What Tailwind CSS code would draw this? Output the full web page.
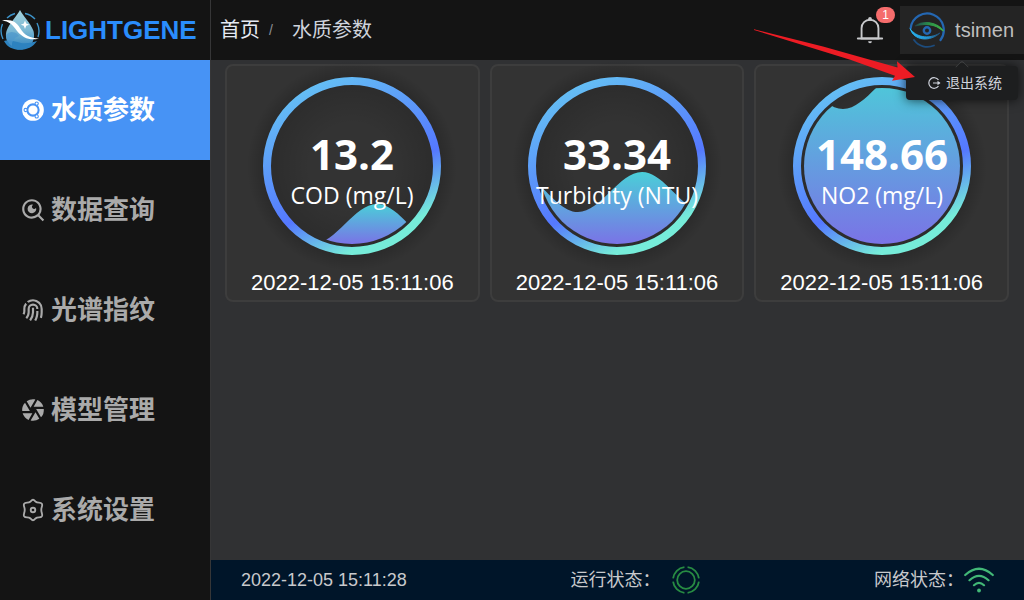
<!DOCTYPE html>
<html lang="zh-CN">
<head>
    <meta charset="UTF-8">
    <meta name="viewport" content="width=device-width, initial-scale=1.0">
    <title>水质参数</title>
    <script src="https://cdn.jsdelivr.net/npm/@tailwindcss/browser@4"></script>
</head>
<body class="flex h-screen overflow-hidden bg-[#303133] font-['Liberation_Sans','Noto_Sans_CJK_SC',sans-serif]">
    <!-- Sidebar -->
    <aside class="flex w-[211px] shrink-0 flex-col border-r border-[#363637] bg-[#141414]">
        <a href="#" class="flex h-[60px] items-center gap-[5px] text-[26px] font-bold text-[#2a8dfc]">
            <svg class="size-10 shrink-0" viewBox="0 0 40 40" fill="none" aria-hidden="true">
                <defs>
                    <linearGradient id="drop" x1="0" y1="0" x2="0" y2="1">
                        <stop offset="0" stop-color="#a3d3dd" />
                        <stop offset=".5" stop-color="#7db9d4" />
                        <stop offset="1" stop-color="#2a7fbd" />
                    </linearGradient>
                </defs>
                <g stroke="#3d93c9" stroke-width="1.4">
                    <path d="M7 8A18.500 18.500 0 0 1 15 3.500M25 3.500A18.500 18.500 0 0 1 35 9M2.500 14A18 18 0 0 0 3 29M37 13A18 18 0 0 1 38 27" />
                </g>
                <path d="M20 0C17 6 10 12 6.500 21C4 30 10 39.500 20 39.500S36 31 33.500 21C30 12 23 6 20 0Z" fill="url(#drop)" />
                <path d="M4 31C8 29 14 31 21 33C28 34 33 32 37 31C33 37 27 39.800 20 39.800C13 39.800 7 37 4 31Z" fill="#2d82bf" />
                <path d="M6 25A8 8 0 0 1 19 26A9 9 0 0 0 12 36Q6 32 6 25Z" fill="#4d97cc" opacity=".7" />
                <path d="M2 20.500C12 19 16 22 20 28C25 36 30 38 39 38.500C30 41 23 38 17 31C12 24 9 21.500 2 20.500Z" transform="translate(0 -10) scale(1 1)" fill="#fff" />
                <path d="M25 10.500L26.200 13.600L29.200 14.700L26.200 15.800L25 19L23.800 15.800L20.800 14.700L23.800 13.600Z" fill="#fff" />
            </svg>
            <span>LIGHTGENE</span>
        </a>
        <nav class="flex flex-col text-[26px] font-bold text-[#aaaaaa]">
            <a href="#" class="flex h-[100px] items-center gap-[5px] bg-[#4793f5] pl-5 text-white" aria-current="page">
                <svg class="size-[26px]" viewBox="0 0 24 24" aria-hidden="true">
                    <circle cx="12" cy="12" r="10" fill="currentColor" />
                    <circle cx="12" cy="12" r="5.200" fill="none" stroke="#4793f5" stroke-width="1.900" />
                    <g fill="currentColor" stroke="#4793f5" stroke-width="1">
                        <circle cx="5.200" cy="12" r="1.500" />
                        <circle cx="15.400" cy="6.110" r="1.500" />
                        <circle cx="15.400" cy="17.890" r="1.500" />
                    </g>
                </svg>
                <span>水质参数</span>
            </a>
            <a href="#" class="flex h-[100px] items-center gap-[5px] pl-5">
                <svg class="size-[26px]" viewBox="0 0 24 24" fill="currentColor" aria-hidden="true">
                    <path d="M18.031 16.617l4.283 4.282-1.415 1.415-4.282-4.283A8.960 8.960 0 0 1 11 20c-4.968 0-9-4.032-9-9s4.032-9 9-9 9 4.032 9 9a8.960 8.960 0 0 1-1.969 5.617zm-2.006-.742A6.977 6.977 0 0 0 18 11c0-3.868-3.133-7-7-7-3.868 0-7 3.132-7 7 0 3.867 3.132 7 7 7a6.977 6.977 0 0 0 4.875-1.975l.150-.150zm-3.847-8.699a2 2 0 1 0 2.646 2.646 4 4 0 1 1-2.646-2.646z" />
                </svg>
                <span>数据查询</span>
            </a>
            <a href="#" class="flex h-[100px] items-center gap-[5px] pl-5">
                <svg class="size-[26px]" viewBox="0 0 24 24" fill="currentColor" aria-hidden="true">
                    <path d="M17 13v1c0 2.770-.664 5.445-1.915 7.846l-.227.420-1.747-.974c1.160-2.080 1.810-4.410 1.882-6.836L15 14v-1h2zm-6-3h2v4l-.005.379a12.941 12.941 0 0 1-2.691 7.549l-.231.290-1.550-1.264a10.944 10.944 0 0 0 2.471-6.588L11 14v-4zm1-4a5 5 0 0 1 5 5h-2a3 3 0 0 0-6 0v3c0 2.235-.820 4.344-2.270 5.977l-.212.230-1.448-1.380a6.969 6.969 0 0 0 1.925-4.524L7 14v-3a5 5 0 0 1 5-5zm0-4a9 9 0 0 1 9 9v3c0 1.698-.202 3.370-.597 4.990l-.139.539-1.930-.526c.392-1.437.613-2.922.658-4.435L19 14v-3A7 7 0 0 0 7.808 5.394L6.383 3.968A8.962 8.962 0 0 1 12 2zM4.968 5.383l1.426 1.425a6.966 6.966 0 0 0-1.390 3.951L5 11 5.004 13c0 1.120-.264 2.203-.762 3.177l-.156.290-1.737-.992c.380-.665.602-1.407.646-2.183L3.004 13v-2a8.940 8.940 0 0 1 1.964-5.617z" />
                </svg>
                <span>光谱指纹</span>
            </a>
            <a href="#" class="flex h-[100px] items-center gap-[5px] pl-5">
                <svg class="size-[26px]" viewBox="0 0 24 24" fill="currentColor" aria-hidden="true">
                    <path d="M9.827 21.763L14.310 14l3.532 6.117A9.955 9.955 0 0 1 12 22c-.746 0-1.473-.082-2.173-.237zM7.890 21.120A10.028 10.028 0 0 1 2.458 15h8.965L7.890 21.119zM2.050 13a9.964 9.964 0 0 1 2.583-7.761L9.112 13H2.050zm4.109-9.117A9.955 9.955 0 0 1 12 2c.746 0 1.473.082 2.173.237L9.690 10 6.159 3.883zM16.110 2.880A10.028 10.028 0 0 1 21.542 9h-8.965l3.533-6.119zM21.950 11a9.964 9.964 0 0 1-2.583 7.761L14.888 11h7.064z" />
                </svg>
                <span>模型管理</span>
            </a>
            <a href="#" class="flex h-[100px] items-center gap-[5px] pl-5">
                <svg class="size-[26px]" viewBox="0 0 24 24" fill="none" stroke="currentColor" stroke-width="1.700" stroke-linejoin="round" aria-hidden="true">
                    <path d="M12 2.500C13 2.500 13.800 3.600 14.600 4.400C15.400 5.200 16.400 5.200 17.500 5.200C18.700 5.200 19.600 5.300 20.200 6.300C20.800 7.400 20.500 8.200 20.100 9.300C19.700 10.500 19.700 13.500 20.100 14.700C20.500 15.800 20.800 16.600 20.200 17.700C19.600 18.700 18.700 18.800 17.500 18.800C16.400 18.800 15.400 18.800 14.600 19.600C13.800 20.400 13 21.500 12 21.500S10.200 20.400 9.400 19.600C8.600 18.800 7.600 18.800 6.500 18.800C5.300 18.800 4.400 18.700 3.800 17.700C3.200 16.600 3.500 15.800 3.900 14.700C4.300 13.500 4.300 10.500 3.900 9.300C3.500 8.200 3.200 7.400 3.800 6.300C4.400 5.300 5.300 5.200 6.500 5.200C7.600 5.200 8.600 5.200 9.400 4.400C10.200 3.600 11 2.500 12 2.500Z" />
                    <circle cx="12" cy="12" r="2.100" />
                </svg>
                <span>系统设置</span>
            </a>
        </nav>
    </aside>

    <div class="flex min-w-0 flex-1 flex-col">
        <!-- Header -->
        <header class="flex h-[60px] shrink-0 items-center justify-between bg-[#141414] pl-[9px] text-xl">
            <nav class="flex items-center" aria-label="breadcrumb">
                <a href="#" class="text-[#e5eaf3]">首页</a>
                <span class="mr-[19px] ml-[9px] text-sm text-[#8d9095]">/</span>
                <span class="text-[#cfd3dc]">水质参数</span>
            </nav>
            <div class="flex items-center gap-[15px]">
                <button class="relative" aria-label="通知">
                    <svg class="size-[30px] text-[#c8c9cc]" viewBox="0 0 1024 1024" fill="currentColor" aria-hidden="true">
                        <path d="M512 64a64 64 0 0 1 64 64v64H448v-64a64 64 0 0 1 64-64z" />
                        <path d="M256 768h512V448a256 256 0 1 0-512 0v320zm256-640a320 320 0 0 1 320 320v384H192V448a320 320 0 0 1 320-320z" />
                        <path d="M96 768h832q32 0 32 32t-32 32H96q-32 0-32-32t32-32zm352 128h128a64 64 0 0 1-128 0z" />
                    </svg>
                    <span class="absolute -top-2 left-[21px] flex h-4 w-[19px] items-center justify-center rounded-full bg-[#f56c6c] text-xs text-white">1</span>
                </button>
                <div class="relative">
                    <button class="flex h-12 items-center gap-[10px] bg-[#242424] pr-[10px] pl-[9px] text-[#bfbfbf]" aria-expanded="true">
                        <svg class="size-9" viewBox="0 0 36 36" fill="none" stroke-linecap="round" aria-hidden="true">
                            <defs>
                                <linearGradient id="lid" gradientUnits="userSpaceOnUse" x1="5" y1="0" x2="35" y2="0">
                                    <stop offset="0" stop-color="#1f5f6a" stop-opacity=".4" />
                                    <stop offset=".5" stop-color="#2b8f48" />
                                    <stop offset="1" stop-color="#42b649" />
                                </linearGradient>
                                <linearGradient id="lower" gradientUnits="userSpaceOnUse" x1="1" y1="0" x2="31" y2="0">
                                    <stop offset="0" stop-color="#27b4f0" />
                                    <stop offset=".6" stop-color="#2594d3" />
                                    <stop offset="1" stop-color="#204a70" />
                                </linearGradient>
                            </defs>
                            <path d="M1.700 16A16.600 16.600 0 1 1 31.500 28" stroke="#2467b2" stroke-width="2.200" />
                            <path d="M5 28A16.500 16.500 0 0 0 25 33.500" stroke="#1d4c7d" stroke-width="1.800" />
                            <path d="M6 14C14 9 27 9 34.500 19C26 12 15 11 6 14Z" fill="url(#lid)" stroke="url(#lid)" stroke-width="1.200" />
                            <path d="M1.300 17C7 25 19 28 31 21C21 30 5 29 1.300 17Z" fill="url(#lower)" stroke="url(#lower)" />
                            <circle cx="18" cy="18.500" r="3.200" stroke="#2467b2" stroke-width="2.400" />
                        </svg>
                        <span>tsimen</span>
                    </button>
                    <div class="absolute top-[60px] right-[6px] z-10 rounded bg-[#1d1e1f] shadow-[0_0_12px_rgba(0,0,0,0.72)]">
                        <span class="absolute -top-1 left-[51px] size-[10px] rotate-45 rounded-tl-sm border-t border-l border-[#414243] bg-[#1d1e1f]"></span>
                        <button class="relative flex h-[34px] w-28 items-center gap-[5px] pl-[21px] text-sm text-[#cfd3dc]">
                            <svg class="size-[14px]" viewBox="0 0 14 14" fill="none" stroke="currentColor" stroke-width="1.200" aria-hidden="true">
                                <path d="M11.500 4A5.300 5.300 0 1 0 11.500 10M6 7H12.500" />
                                <path d="M10.500 4.800L13.500 7L10.500 9.200Z" fill="currentColor" stroke="none" />
                            </svg>
                            <span>退出系统</span>
                        </button>
                    </div>
                </div>
            </div>
        </header>

        <!-- Gauges -->
        <main class="grid flex-1 grid-cols-3 content-start gap-[10px] overflow-hidden pt-1 pr-[15px] pl-[14px] font-['Liberation_Sans',sans-serif]">
            <section class="flex flex-col items-center rounded-lg border-2 border-[#3d3d3d] bg-[#333333]">
                <svg class="size-[200px] overflow-visible font-['Open_Sans','Noto_Sans',sans-serif]" viewBox="-100 -100 200 200" role="img" aria-label="COD">
                    <defs>
                        <linearGradient id="ring" gradientUnits="userSpaceOnUse" x1="-40" y1="-79" x2="34" y2="68">
                            <stop offset="0" stop-color="#64bdf4" />
                            <stop offset=".68" stop-color="#5578ff" />
                            <stop offset="1" stop-color="#76ecd9" />
                        </linearGradient>
                        <linearGradient id="water" x1="0" y1="0" x2="0" y2="1">
                            <stop offset="0" stop-color="#4acfd8" />
                            <stop offset="1" stop-color="#7a73e6" />
                        </linearGradient>
                        <radialGradient id="glow">
                            <stop offset=".4" stop-color="#000" stop-opacity="0" />
                            <stop offset=".85" stop-color="#000" stop-opacity=".16" />
                            <stop offset="1" stop-color="#000" stop-opacity="0" />
                        </radialGradient>
                        <clipPath id="bowl"><circle r="78" /></clipPath>
                    </defs>
                    <circle r="105" fill="url(#glow)" />
                    <circle r="85" fill="none" stroke="url(#ring)" stroke-width="8" />
                    <g clip-path="url(#bowl)">
                        <path d="M-102 38C-79 38 -62 78 -39 78S2 38 25 38S65 78 88 78H-102Z" fill="url(#water)" />
                    </g>
                    <text y="4" text-anchor="middle" font-size="42" font-weight="700" fill="#fff">13.2</text>
                    <text y="38" text-anchor="middle" font-size="23" fill="#fff">COD (mg/L)</text>
                </svg>
                <time class="text-[22px] leading-[34px] text-white">2022-12-05 15:11:06</time>
            </section>

            <section class="flex flex-col items-center rounded-lg border-2 border-[#3d3d3d] bg-[#333333]">
                <svg class="size-[200px] overflow-visible font-['Open_Sans','Noto_Sans',sans-serif]" viewBox="-100 -100 200 200" role="img" aria-label="Turbidity">
                    <circle r="105" fill="url(#glow)" />
                    <circle r="85" fill="none" stroke="url(#ring)" stroke-width="8" />
                    <g clip-path="url(#bowl)">
                        <path d="M-102 6C-79 6 -62 46 -39 46S2 6 25 6S65 46 88 46V78H-102Z" fill="url(#water)" />
                    </g>
                    <text y="4" text-anchor="middle" font-size="42" font-weight="700" fill="#fff">33.34</text>
                    <text y="38" text-anchor="middle" font-size="23" fill="#fff">Turbidity (NTU)</text>
                </svg>
                <time class="text-[22px] leading-[34px] text-white">2022-12-05 15:11:06</time>
            </section>

            <section class="flex flex-col items-center rounded-lg border-2 border-[#3d3d3d] bg-[#333333]">
                <svg class="size-[200px] overflow-visible font-['Open_Sans','Noto_Sans',sans-serif]" viewBox="-100 -100 200 200" role="img" aria-label="NO2">
                    <circle r="105" fill="url(#glow)" />
                    <circle r="85" fill="none" stroke="url(#ring)" stroke-width="8" />
                    <g clip-path="url(#bowl)">
                        <path d="M-102 -97C-79 -97 -62 -57 -39 -57S2 -97 25 -97S65 -57 88 -57V78H-102Z" fill="url(#water)" />
                    </g>
                    <text y="4" text-anchor="middle" font-size="42" font-weight="700" fill="#fff">148.66</text>
                    <text y="38" text-anchor="middle" font-size="23" fill="#fff">NO2 (mg/L)</text>
                </svg>
                <time class="text-[22px] leading-[34px] text-white">2022-12-05 15:11:06</time>
            </section>
        </main>

        <!-- Status bar -->
        <footer class="flex h-10 shrink-0 items-center justify-between bg-[#001529] px-[30px] text-lg text-[#c8c9cc]">
            <time>2022-12-05 15:11:28</time>
            <div class="flex items-center pr-[10px]">
                <span>运行状态：</span>
                <svg class="ml-3 size-7" viewBox="-14 -14 28 28" fill="none" stroke="#278c43" stroke-width="1.800" aria-hidden="true">
                    <circle r="8.800" />
                    <circle r="13" pathLength="400" stroke-dasharray="84 16" stroke-dashoffset="-8" />
                </svg>
            </div>
            <div class="flex items-center">
                <span>网络状态：</span>
                <svg class="size-[30px]" viewBox="0 0 30 30" fill="none" stroke="#42b877" stroke-width="2.200" stroke-linecap="round" aria-hidden="true">
                    <path d="M1.200 10Q15 -2.500 28.800 10M5.500 15.200Q15 6.500 24.500 15.200M10 20.200Q15 15.500 20 20.200" />
                    <circle cx="15" cy="25.500" r="1.900" fill="#42b877" stroke="none" />
                </svg>
            </div>
        </footer>
    </div>

    <!-- Pointer to the logout entry -->
    <svg class="pointer-events-none absolute top-7 right-[109px] z-20 h-[54px] w-[162px]" viewBox="0 0 162 54" aria-hidden="true">
        <path d="M1 2L1 1.200L70 18.500L144.500 39.600L144 33.300L162 49L139 52.700L142 47.700L98 32Z" fill="#ed1c24" />
    </svg>
</body>
</html>
